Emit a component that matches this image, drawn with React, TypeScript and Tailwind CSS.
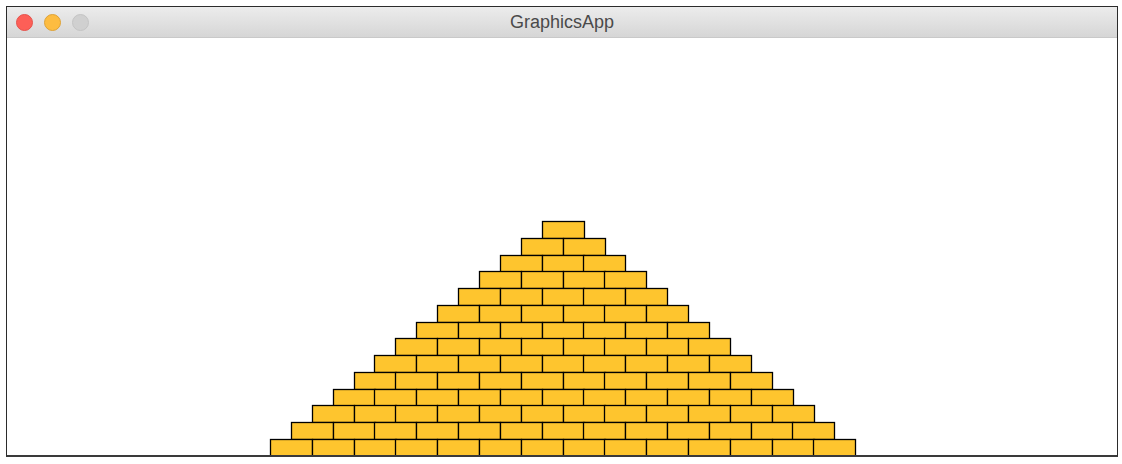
import type { ReactElement } from "react";

const ROWS = 14;
const BRICK_W = 41.8;
const BRICK_H = 16.77;
const CENTER_X = 562.5;
const TOP_Y = 221;
// goc cua vung ve tinh theo toa do trang
const OX = 7;
const OY = 38;

// Tinh toa do tung vien gach cua kim tu thap
function bricks(): { x: number; y: number }[] {
  const out: { x: number; y: number }[] = [];
  for (let r = 0; r < ROWS; r++) {
    const n = r + 1;
    const y = Math.round(TOP_Y + r * BRICK_H) - OY;
    const start = CENTER_X - (n * BRICK_W) / 2;
    for (let i = 0; i < n; i++) {
      out.push({ x: Math.round(start + i * BRICK_W) - OX, y });
    }
  }
  return out;
}

function Pyramid(): ReactElement {
  return (
    <svg width={1110} height={417} className="block">
      {bricks().map((b, i) => (
        <rect
          key={i}
          x={b.x + 0.5}
          y={b.y + 0.5}
          width={Math.round(BRICK_W)}
          height={17}
          fill="#fec52e"
          stroke="#000"
          strokeWidth={1.3}
        />
      ))}
    </svg>
  );
}

export default function App(): ReactElement {
  return (
    <div className="h-[464px] w-[1122px] bg-white pl-[6px] pt-[6px]">
      <div className="flex h-[451px] w-[1112px] flex-col overflow-hidden border border-[#2b2b2b] border-b-2 border-b-[#3a3a3a]">
        {/* Thanh tieu de */}
        <div className="relative flex h-[31px] shrink-0 items-center border-b border-[#c9c9c9] bg-gradient-to-b from-[#ececec] to-[#d6d6d6]">
          <div className="flex items-center gap-[11px] pl-[9px]">
            <span className="h-[17px] w-[17px] rounded-full border border-[#e5524c] bg-[#fd5f57]" />
            <span className="h-[17px] w-[17px] rounded-full border border-[#dea236] bg-[#fdbc40]" />
            <span className="h-[17px] w-[17px] rounded-full border border-[#c4c4c4] bg-[#d0d0d0]" />
          </div>
          <span className="absolute left-0 right-0 text-center text-[18px] text-[#4a4a4a] [font-family:'Liberation_Sans',Arial,sans-serif]">
            GraphicsApp
          </span>
        </div>

        {/* Vung ve */}
        <div className="flex-1 bg-white">
          <Pyramid />
        </div>
      </div>
    </div>
  );
}
